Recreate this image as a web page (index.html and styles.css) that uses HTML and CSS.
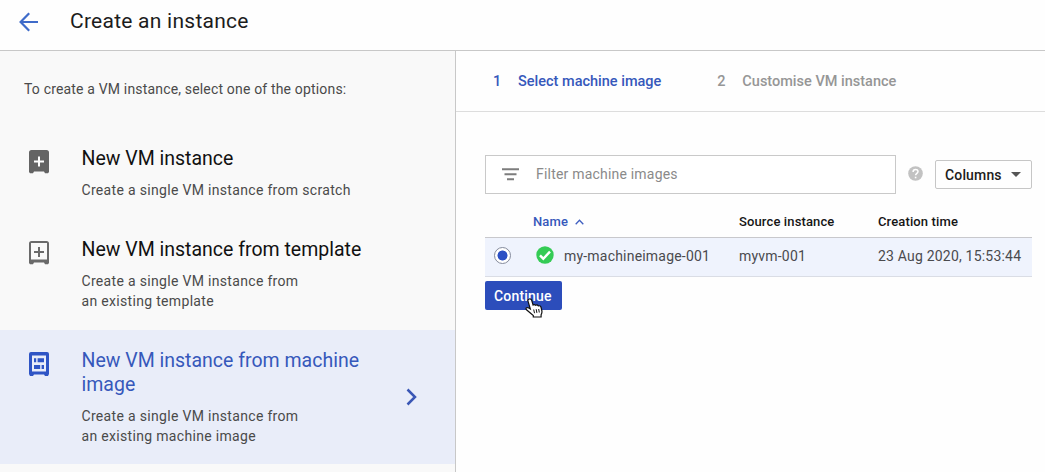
FILE: index.html
```html
<!DOCTYPE html>
<html lang="en">
<head>
<meta charset="utf-8">
<title>Create an instance</title>
<link rel="stylesheet" href="styles.css">
</head>
<body>
<div class="page">
  <header class="header">
    <svg class="back" width="20" height="20" viewBox="0 0 20 20"><path d="M19 10H2M10.2 1.2L1.6 10l8.600 8.800" fill="none" stroke="#3f6bc9" stroke-width="2.200"/></svg>
    <h1 class="title">Create an instance</h1>
  </header>
  <div class="body">
    <aside class="sidebar">
      <p class="intro">To create a VM instance, select one of the options:</p>
      <section class="option option-scratch">
        <svg class="option-icon" width="20" height="24" viewBox="0 0 20 24"><path d="M2.500 0h15A2.500 2.500 0 0 1 20 2.500V22l-1 1.300h-3L15 21.500H5l-1 1.800H1L0 22V2.500A2.500 2.500 0 0 1 2.500 0z" fill="#646464"/><path d="M10 6.500v10M5 11.500h10" stroke="#fff" stroke-width="2"/></svg>
        <div class="option-text">
          <h2 class="option-title">New VM instance</h2>
          <p class="option-desc">Create a single VM instance from scratch</p>
        </div>
      </section>
      <section class="option option-template">
        <svg class="option-icon" width="20" height="24" viewBox="0 0 20 24"><path d="M2.500 0h15A2.500 2.500 0 0 1 20 2.500V22l-1 1.300h-3L15 21.500H5l-1 1.800H1L0 22V2.500A2.500 2.500 0 0 1 2.500 0zM2 2v16.500h16V2z" fill="#6a6a6a" fill-rule="evenodd"/><path d="M10 6v10M5 11h10" stroke="#6a6a6a" stroke-width="2"/></svg>
        <div class="option-text">
          <h2 class="option-title">New VM instance from template</h2>
          <p class="option-desc">Create a single VM instance from<br>an existing template</p>
        </div>
      </section>
      <section class="option option-image">
        <svg class="option-icon" width="20" height="24" viewBox="0 0 20 24"><path d="M2 0h16a2 2 0 0 1 2 2v20l-1 2h-3l-1-1.500H5L4 24H1l-1-2V2a2 2 0 0 1 2-2zM3 3.500v16h14v-16z" fill="#2f55c5" fill-rule="evenodd"/><path d="M5 6.200h2.200v4H5zM8.600 6.200H15v4H8.600zM5 13h6.200v4H5zM12.600 13H15v4h-2.400z" fill="#2f55c5"/></svg>
        <div class="option-text">
          <h2 class="option-title">New VM instance from machine image</h2>
          <p class="option-desc">Create a single VM instance from<br>an existing machine image</p>
        </div>
        <svg class="chevron" width="12" height="18" viewBox="0 0 12 18"><path d="M1.500 1.500L9 9l-7.500 7.500" fill="none" stroke="#3a57b5" stroke-width="2.500"/></svg>
      </section>
    </aside>
    <main class="main">
      <nav class="steps">
        <span class="step active"><span class="num">1</span><span>Select machine image</span></span>
        <span class="step"><span class="num">2</span><span>Customise VM instance</span></span>
      </nav>
      <div class="content">
        <div class="toolbar">
          <div class="filter">
            <svg width="18" height="13" viewBox="0 0 18 13"><path d="M0 1.300h17M2.500 6.300h12M5 11.300h7" stroke="#7d7d7d" stroke-width="2"/></svg>
            <span class="placeholder">Filter machine images</span>
          </div>
          <svg class="help" width="15" height="15" viewBox="0 0 15 15"><circle cx="7.500" cy="7.500" r="7.300" fill="#c2c2c2"/><path d="M5.100 5.900c0-3.400 4.900-3.200 4.900-.3 0 1.700-2.400 1.700-2.400 3.600" fill="none" stroke="#fff" stroke-width="1.500"/><path d="M6.800 10.700h1.600v1.600H6.800z" fill="#fff"/></svg>
          <div class="columns"><span>Columns</span><span class="caret"></span></div>
        </div>
        <div class="row head">
          <span class="name-head">Name<svg class="sort" width="9" height="6" viewBox="0 0 9 6"><path d="M.7 5.200l3.800-4 3.800 4" fill="none" stroke="#3f5fc0" stroke-width="1.300"/></svg></span>
          <span>Source instance</span>
          <span>Creation time</span>
        </div>
        <div class="row item">
          <span class="radio"></span>
          <svg class="ok" width="18" height="18" viewBox="0 0 18 18"><circle cx="9" cy="9" r="8.700" fill="#34cb55"/><path d="M4 9.300l3.300 3.400L14 5.600" fill="none" stroke="#fff" stroke-width="2.400"/></svg>
          <span>my-machineimage-001</span>
          <span>myvm-001</span>
          <span>23 Aug 2020, 15:53:44</span>
        </div>
        <div class="continue"><span>Continue</span>
          <svg class="cursor" width="18" height="20" viewBox="0 0 18 20"><path d="M4.200 1c1.500-.5 2.300.6 2.700 2l1.200 4c1.200-.7 2-.4 2.600.3 1-.6 2-.3 2.600.6 1.600-.5 2.500.3 2.800 1.600l.8 3.500c.3 1.500-.3 2.600-.8 3.700V19H8.300v-1.500L1.500 11.800c-1.200-1.500.2-2.800 1.800-2l2 1.200L3 3.200C2.700 2.200 3.200 1.300 4.200 1z" fill="#fff" stroke="#111" stroke-width="1.200"/><path d="M8.700 11.500l.8 3.700M11.200 11.200l.7 3.700M13.700 11l.6 3.500" stroke="#111" stroke-width="1"/></svg>
        </div>
      </div>
    </main>
  </div>
</div>
</body>
</html>
```
FILE: styles.css
```css
* { box-sizing: border-box; }
body { margin: 0; font-family: Roboto, "Liberation Sans", sans-serif; color: #4a4a4a; background: #fefefe; }
h1, h2, p { margin: 0; font-weight: 400; }
svg { flex: none; display: block; }
.page { height: 472px; display: flex; flex-direction: column; overflow: hidden; }
.header { height: 51px; flex: none; display: flex; align-items: flex-start; padding: 8px 0 0 19px; border-bottom: 1px solid #c8c8c8; }
.back { margin-top: 4px; }
.title { margin-left: 31px; font-size: 21px; line-height: 26px; color: #1c1c1c; letter-spacing: 0.25px; white-space: nowrap; }
.body { flex: 1; display: flex; min-height: 0; }
.sidebar { width: 456px; flex: none; border-right: 1px solid #c8c8c8; background: #f9f9f9; }
.intro { padding: 28px 0 0 24px; font-size: 14px; line-height: 20px; letter-spacing: 0.17px; }
.option { display: flex; padding-left: 28.500px; }
.option-scratch { height: 91px; margin-top: 47px; }
.option-template { height: 93px; }
.option-image { padding-top: 18px; height: 134px; background: #e9edf9; }
.option-icon { margin-top: 4px; }
.option-text { margin-left: 33px; padding-top: 1px; width: 300px; }
.option-title { font-size: 19.500px; line-height: 24px; color: #111; }
.option-image .option-title { color: #3658bb; }
.option-desc { margin-top: 10px; font-size: 14px; line-height: 19.500px; letter-spacing: 0.32px; }
.chevron { margin: 40px 0 0 24.500px; }
.main { flex: 1; min-width: 0; }
.steps { height: 61px; display: flex; align-items: center; gap: 56px; padding-left: 37px; border-bottom: 1px solid #ddd; font-size: 14.500px; font-weight: 500; color: #969696; white-space: nowrap; }
.step { display: flex; }
.num { width: 25px; }
.active { color: #3658bb; }
.content { padding: 43px 13px 0 29px; }
.toolbar { display: flex; align-items: center; }
.filter { width: 411px; height: 39px; flex: none; border: 1px solid #c9c9c9; display: flex; align-items: center; padding: 0 0 1px 16px; background: #fff; }
.placeholder { margin-left: 16px; font-size: 14px; letter-spacing: 0.2px; color: #8a8a8a; }
.help { margin: -2px 0 0 12px; }
.columns { margin-left: auto; width: 97px; height: 29px; border: 1px solid #c6c6c6; border-radius: 2px; display: flex; align-items: center; padding: 0 10px 0 9px; font-size: 14px; font-weight: 500; letter-spacing: 0.15px; color: #1c1c1c; }
.caret { margin-left: auto; border: 5px solid transparent; border-top-color: #555; border-bottom: 0; }
.row { display: grid; grid-template-columns: 48px 31px 175px 139px 1fr; align-items: center; white-space: nowrap; }
.head { height: 43px; padding-top: 12px; font-size: 13px; font-weight: 500; letter-spacing: 0.13px; color: #151515; }
.name-head { grid-column: 2 / 4; display: flex; align-items: center; color: #3658bb; }
.sort { margin-left: 7px; }
.item { height: 40px; padding-bottom: 2px; border-top: 1px solid #c8c8cc; border-bottom: 1px solid #dadde5; background: #eff3fd; font-size: 14px; letter-spacing: 0.2px; color: #4a4a4e; }
.radio { width: 17px; height: 17px; margin: 0 0 2px 9px; border: 1px solid #858b9c; border-radius: 50%; background: radial-gradient(circle, #2c50c4 0 4.700px, #fff 5.300px); }
.ok { margin: 0 0 2px 3px; }
.continue { width: 77px; height: 29px; margin-top: 4px; border-radius: 2px; background: #2c4dbb; color: #fff; font-size: 14px; font-weight: 500; letter-spacing: 0.2px; display: flex; align-items: center; padding-left: 9px; position: relative; }
.cursor { position: absolute; left: 40px; top: 17px; }
```
